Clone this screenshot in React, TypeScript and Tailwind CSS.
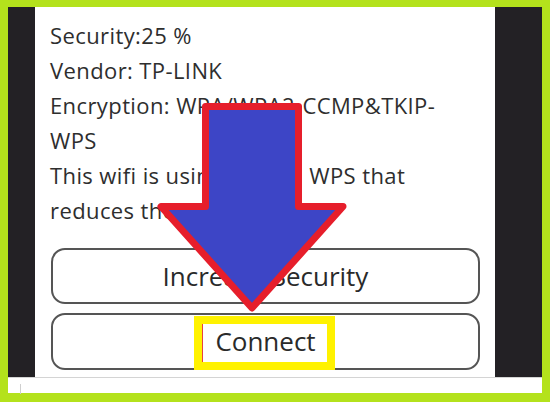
import React from "react";

export default function App() {
  const font = { fontFamily: '"Open Sans", "Noto Sans", sans-serif' };
  return (
    <div
      className="relative w-[550px] h-[402px] bg-[#b4e21c] pt-[7px] pl-[8px] pr-[8px] pb-[9px] flex flex-col overflow-hidden"
      style={font}
    >
      <div className="flex h-[370px]">
        <div className="w-[27px] bg-[#232125]" />
        <div className="w-[460px] bg-white pl-[15px] pr-[15px] pt-[11px] flex flex-col">
          <div className="text-[22px] leading-[35px] text-[#2e2e2e] tracking-[0.4px] whitespace-nowrap">
            <p>Security:25 %</p>
            <p>Vendor: TP-LINK</p>
            <p>
              Encryption: WPA/WPA2-CCMP&amp;TKIP-
              <br />
              WPS
            </p>
            <p>
              This wifi is using the old WPS that
              <br />
              reduces the security.
            </p>
          </div>
          <button className="mt-[20px] ml-px w-[429px] h-[56px] border-2 border-[#555] rounded-[14px] text-[26px] text-[#2a2a2a] flex items-center justify-center">
            Increase Security
          </button>
          <button className="mt-[9px] ml-px w-[429px] h-[57px] border-2 border-[#555] rounded-[14px] text-[26px] text-[#2a2a2a] flex items-center justify-center">
            Connect
          </button>
        </div>
        <div className="flex-1 bg-[#232125]" />
      </div>
      <div className="h-[16px] bg-white border-t border-[#d4d4d4] flex">
        <div className="ml-[12px] mt-[6px] w-px h-[10px] bg-[#cfcfcf]" />
      </div>

      <div className="absolute left-[194px] top-[316px] w-[141px] h-[54px] border-[8px] border-[#fff200]">
        <div className="w-px h-full bg-[#e84040]" />
      </div>

      <svg
        className="absolute left-0 top-0"
        width="550"
        height="402"
        viewBox="0 0 550 402"
      >
        <path
          d="M205.5 106.5 H298.5 V206.5 H343 L252 308 L161 206.5 H205.5 Z"
          fill="#3d45c6"
          stroke="#e61e2b"
          strokeWidth="7"
          strokeLinejoin="round"
        />
      </svg>
    </div>
  );
}
